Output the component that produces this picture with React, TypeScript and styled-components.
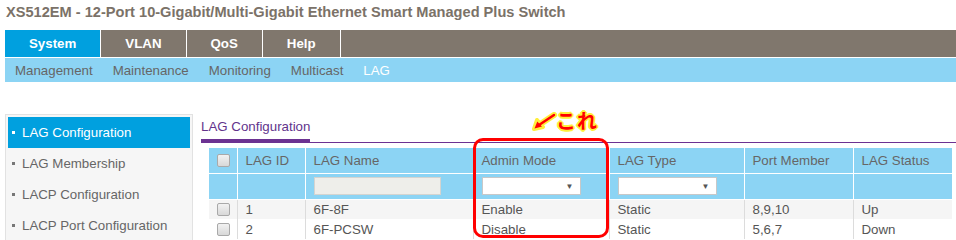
import React from "react";
import styled, { createGlobalStyle } from "styled-components";

const GlobalStyle = createGlobalStyle`
  html, body {
    margin: 0;
    padding: 0;
    background: #fff;
  }
  body {
    font-family: "Liberation Sans", Arial, sans-serif;
    font-size: 13.3px;
    color: #666;
  }
`;

const TOP_TABS = ["System", "VLAN", "QoS", "Help"];
const SUB_TABS = ["Management", "Maintenance", "Monitoring", "Multicast", "LAG"];
const SIDE_ITEMS = [
  "LAG Configuration",
  "LAG Membership",
  "LACP Configuration",
  "LACP Port Configuration",
];

type Lag = {
  id: number;
  name: string;
  mode: string;
  type: string;
  members: string;
  status: string;
};

const LAGS: Lag[] = [
  { id: 1, name: "6F-8F", mode: "Enable", type: "Static", members: "8,9,10", status: "Up" },
  { id: 2, name: "6F-PCSW", mode: "Disable", type: "Static", members: "5,6,7", status: "Down" },
];

const COL_WIDTHS = [28, 68, 168, 136, 135, 109, 99];

const App = () => {
  return (
    <>
      <GlobalStyle />
      <Page>
        <Title>XS512EM - 12-Port 10-Gigabit/Multi-Gigabit Ethernet Smart Managed Plus Switch</Title>
        <TopNav>
          {TOP_TABS.map((t) => (
            <TopTab key={t} active={t === "System"}>
              {t}
            </TopTab>
          ))}
        </TopNav>
        <SubNav>
          {SUB_TABS.map((t) => (
            <SubTab key={t} active={t === "LAG"}>
              {t}
            </SubTab>
          ))}
        </SubNav>
        <Body>
          <Sidebar>
            {SIDE_ITEMS.map((item, i) => (
              <SideItem key={item} active={i === 0}>
                <Bullet active={i === 0} />
                {item}
              </SideItem>
            ))}
          </Sidebar>
          <Main>
            <TabStrip>
              <PageTab>LAG Configuration</PageTab>
            </TabStrip>
            <Table>
              <colgroup>
                {COL_WIDTHS.map((w, i) => (
                  <col key={i} style={{ width: w }} />
                ))}
              </colgroup>
              <thead>
                <HeadRow>
                  <HeadCell>
                    <Check />
                  </HeadCell>
                  <HeadCell>LAG ID</HeadCell>
                  <HeadCell>LAG Name</HeadCell>
                  <HeadCell>Admin Mode</HeadCell>
                  <HeadCell>LAG Type</HeadCell>
                  <HeadCell>Port Member</HeadCell>
                  <HeadCell>LAG Status</HeadCell>
                </HeadRow>
                <FilterRow>
                  <HeadCell />
                  <HeadCell />
                  <HeadCell>
                    <NameInput />
                  </HeadCell>
                  <HeadCell>
                    <Select>
                      <Caret>▼</Caret>
                    </Select>
                  </HeadCell>
                  <HeadCell>
                    <Select>
                      <Caret>▼</Caret>
                    </Select>
                  </HeadCell>
                  <HeadCell />
                  <HeadCell />
                </FilterRow>
              </thead>
              <tbody>
                {LAGS.map((lag, i) => (
                  <DataRow key={lag.id} shaded={i % 2 === 0}>
                    <Cell>
                      <Check />
                    </Cell>
                    <Cell>{lag.id}</Cell>
                    <Cell>{lag.name}</Cell>
                    <Cell>{lag.mode}</Cell>
                    <Cell>{lag.type}</Cell>
                    <Cell>{lag.members}</Cell>
                    <Cell>{lag.status}</Cell>
                  </DataRow>
                ))}
              </tbody>
            </Table>
          </Main>
          {/* annotation over the Admin Mode column */}
          <Highlight />
          <Note>
            <svg width="26" height="20" viewBox="0 0 26 20">
              <path d="M22 3 L7 13" stroke="#ffef3a" strokeWidth="6" strokeLinecap="round" fill="none" />
              <path d="M2 17 L5 8 L11 15 Z" fill="#ffef3a" stroke="#ffef3a" strokeWidth="4" strokeLinejoin="round" />
              <path d="M22 3 L7 13" stroke="#f00" strokeWidth="2.5" strokeLinecap="round" fill="none" />
              <path d="M2.5 16.5 L5.3 9.5 L10 14.5 Z" fill="#f00" />
            </svg>
            <NoteText>これ</NoteText>
          </Note>
        </Body>
      </Page>
    </>
  );
};

const Page = styled.div`
  width: 956px;
  height: 240px;
  overflow: hidden;
`;

const Title = styled.div`
  height: 30px;
  padding: 3px 0 0 6px;
  box-sizing: border-box;
  font-size: 14.6px;
  font-weight: bold;
  color: #7b7268;
  line-height: 18px;
`;

const TopNav = styled.div`
  display: flex;
  margin-left: 5px;
  height: 27px;
  background: #80776d;
  border-bottom: 1px solid #fff;
`;

const TopTab = styled.div<{ active?: boolean }>`
  display: flex;
  align-items: center;
  padding: 0 24px;
  font-size: 13.3px;
  font-weight: bold;
  color: #fff;
  background: ${(p) => (p.active ? "#00a0df" : "#80776d")};
  border-right: 1px solid #fff;
`;

const SubNav = styled.div`
  display: flex;
  gap: 20px;
  align-items: center;
  margin-left: 5px;
  height: 24px;
  padding-left: 10px;
  background: #8cd4f4;
`;

const SubTab = styled.div<{ active?: boolean }>`
  font-size: 13.3px;
  color: ${(p) => (p.active ? "#fff" : "#666")};
`;

const Body = styled.div`
  position: relative;
  display: flex;
  gap: 8px;
  padding: 32px 0 0 5px;
`;

const Sidebar = styled.div`
  width: 182px;
  padding: 2px;
  background: #f6f6f6;
  border: 1px solid #e2e2e2;
  align-self: flex-start;
`;

const SideItem = styled.div<{ active?: boolean }>`
  display: flex;
  align-items: center;
  gap: 7px;
  height: 31px;
  padding-left: 4px;
  color: ${(p) => (p.active ? "#fff" : "#666")};
  background: ${(p) => (p.active ? "#00a0df" : "transparent")};
`;

const Bullet = styled.span<{ active?: boolean }>`
  width: 3px;
  height: 3px;
  background: ${(p) => (p.active ? "#fff" : "#777")};
`;

const Main = styled.div`
  flex: 1;
  padding-top: 4px;
`;

const TabStrip = styled.div`
  display: flex;
  border-bottom: 1px solid #6c3292;
  height: 24px;
`;

const PageTab = styled.div`
  color: #62338c;
  border-bottom: 3px solid #6c3292;
  margin-bottom: -2px;
  height: 21px;
  line-height: 18px;
`;

const Table = styled.table`
  margin: 5px 0 0 8px;
  width: 743px;
  border-collapse: collapse;
  table-layout: fixed;
  font-size: 13.3px;
`;

const HeadRow = styled.tr`
  height: 25px;
  background: #8cd4f4;
`;

const FilterRow = styled.tr`
  height: 26px;
  background: #8cd4f4;
`;

const HeadCell = styled.th`
  padding: 0 8px;
  text-align: left;
  font-weight: normal;
  color: #666;
  border: 1px solid #fff;
  border-top: none;
  &:first-child {
    border-left: none;
  }
  &:last-child {
    border-right: none;
  }
`;

const DataRow = styled.tr<{ shaded?: boolean }>`
  height: 20px;
  background: ${(p) => (p.shaded ? "#f5f5f5" : "#fff")};
`;

const Cell = styled.td`
  padding: 0 8px;
  color: #555;
  border-left: 1px solid #dcdcdc;
  &:first-child {
    border-left: none;
  }
`;

const Check = styled.div`
  width: 11px;
  height: 11px;
  border: 1px solid #a9a9a9;
  border-radius: 2px;
  background: linear-gradient(#f2f2f2, #d8d8d8);
`;

const NameInput = styled.div`
  width: 125px;
  height: 16px;
  background: #eeeeea;
  border: 1px solid #d4d4d0;
`;

const Select = styled.div`
  display: flex;
  align-items: center;
  justify-content: flex-end;
  width: 91px;
  height: 16px;
  padding-right: 6px;
  background: #fff;
  border: 1px solid #c8c8c8;
`;

const Caret = styled.span`
  font-size: 8px;
  color: #555;
`;

const Highlight = styled.div`
  position: absolute;
  left: 473px;
  top: 56px;
  width: 130px;
  height: 94px;
  border: 3px solid #f00;
  border-radius: 10px;
`;

const Note = styled.div`
  position: absolute;
  left: 532px;
  top: 30px;
  display: flex;
  align-items: flex-start;
`;

const NoteText = styled.span`
  margin: -1px 0 0 -2px;
  font-family: "Noto Sans CJK JP", sans-serif;
  font-weight: bold;
  font-size: 20px;
  line-height: 20px;
  letter-spacing: 1px;
  color: #f00;
  text-shadow: 1px 1px 0 #ffef3a, -1px -1px 0 #ffef3a, 1px -1px 0 #ffef3a,
    -1px 1px 0 #ffef3a, 2px 0 0 #ffef3a, -2px 0 0 #ffef3a, 0 2px 0 #ffef3a,
    0 -2px 0 #ffef3a;
`;

export default App;
